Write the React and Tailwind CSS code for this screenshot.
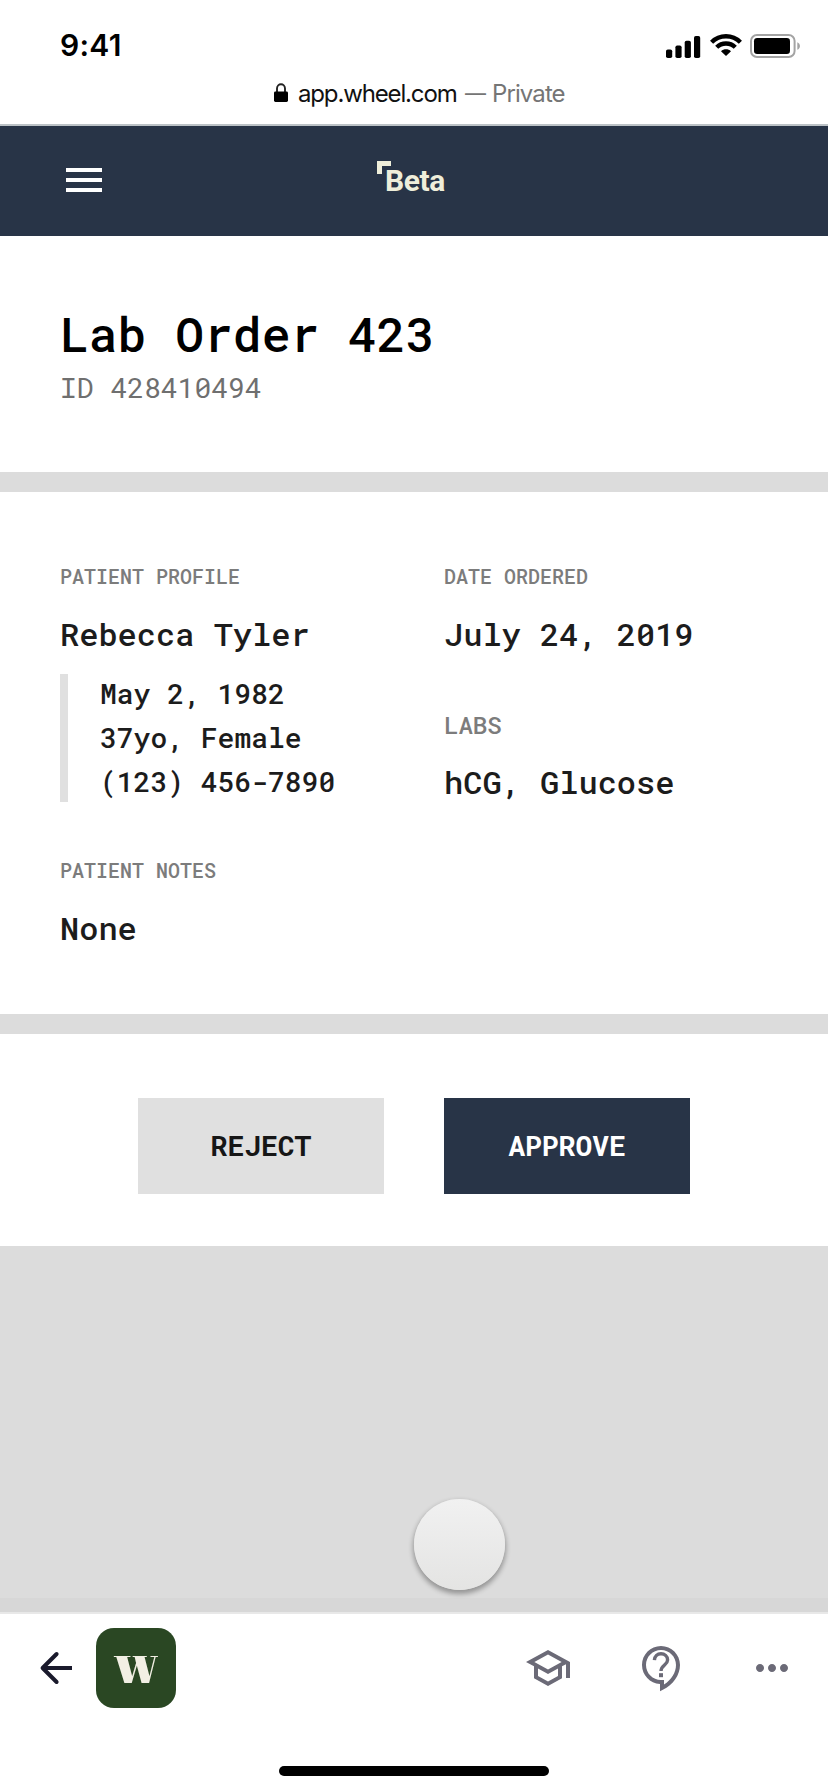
import { MdOutlineSchool, MdMoreHoriz } from "react-icons/md";

function StatusBar() {
  return (
    <div className="flex h-[68px] items-start justify-between pl-[60px] pr-[26px] font-['Inter',sans-serif]">
      <span className="mt-[27px] text-[30px] leading-9 font-semibold tracking-[0.3px] text-black">9:41</span>
      <div className="mt-8 flex gap-[8px]">
        <svg width="36" height="28" viewBox="0 0 36 28" fill="#000">
          <rect x="0" y="17.5" width="6.2" height="8.5" rx="1.8" />
          <rect x="9.4" y="13.5" width="6.2" height="12.5" rx="1.8" />
          <rect x="18.7" y="8.8" width="6.2" height="17.2" rx="1.8" />
          <rect x="28" y="4" width="6.2" height="22" rx="1.8" />
        </svg>
        <svg width="32" height="28" viewBox="0 0 32 28" fill="none" stroke="#000" strokeWidth="4.4">
          <path d="M1.6 10.2C9.6 2.2 22.4 2.2 30.4 10.2" />
          <path d="M6.7 15.3C11.9 10.2 20.1 10.2 25.3 15.3" />
          <path d="M11 19.2C13.9 16.6 18.1 16.6 21 19.2L16 24Z" fill="#000" stroke="none" />
        </svg>
        <svg width="52" height="28" viewBox="0 0 52 28">
          <rect x="1" y="3" width="43.6" height="22" rx="6" fill="none" stroke="#a3a3a3" strokeWidth="2" />
          <rect x="4" y="6" width="36" height="16" rx="3.2" fill="#000" />
          <path d="M47.3 10.2C50.8 11.5 50.8 16.5 47.3 17.8Z" fill="#a3a3a3" />
        </svg>
      </div>
    </div>
  );
}

function AddressBar() {
  return (
    <div className="flex h-[56px] items-start pl-[273px] pt-[11px] font-['Inter',sans-serif] text-[24px] leading-[30px]">
      <svg className="mt-1 shrink-0" width="16" height="20" viewBox="0 0 16 20">
        <path d="M4 9V5.6C4 -0.2 12 -0.2 12 5.6V9" fill="none" stroke="#222" strokeWidth="1.9" />
        <rect x="1" y="8.5" width="14" height="10.5" rx="1.4" fill="#000" />
      </svg>
      <span className="ml-[9px] w-[160px] tracking-[-1.15px] text-[#111]">app.wheel.com</span>
      <span className="ml-[7px] w-[27px] text-[21px] text-[#757575]">—</span>
      <span className="tracking-[-0.9px] text-[#757575]">Private</span>
    </div>
  );
}

function NavBar() {
  return (
    <header className="flex h-[110px] items-start bg-[#283447]">
      <button aria-label="Menu" className="ml-[66px] mt-[42px] flex w-9 flex-col gap-1.5">
        <span className="h-1 bg-white" />
        <span className="h-1 bg-white" />
        <span className="h-1 bg-white" />
      </button>
      <div className="ml-[275px] mt-[35px] flex items-start">
        <span className="h-[13px] w-[14px] border-l-5 border-t-5 border-[#efeeda]" />
        <span className="-ml-[6px] mt-[2px] font-['Roboto',sans-serif] text-[30px] leading-9 font-bold tracking-[-0.4px] text-[#efeeda]">
          Beta
        </span>
      </div>
    </header>
  );
}

function Label({ children }) {
  return <div className="text-[20px] leading-6 font-medium text-[#7c7c7c]">{children}</div>;
}

function Value({ children }) {
  return <div className="text-[32px] leading-10 font-medium text-[#1c1c1c]">{children}</div>;
}

function Details() {
  return (
    <section className="grid h-[522px] grid-cols-[384px_1fr] content-start bg-white pl-[60px] pt-[72px]">
      <div>
        <Label>PATIENT PROFILE</Label>
        <div className="mt-[26px]"><Value>Rebecca Tyler</Value></div>
        <div className="mt-5 flex h-32 flex-col justify-center border-l-8 border-[#e0e0e0] pl-8 text-[28px] font-medium text-[#1c1c1c]">
          <span className="h-11 shrink-0 leading-[44px]">May 2, 1982</span>
          <span className="h-11 shrink-0 leading-[44px]">37yo, Female</span>
          <span className="h-11 shrink-0 leading-[44px]">(123) 456-7890</span>
        </div>
        <div className="mt-14"><Label>PATIENT NOTES</Label></div>
        <div className="mt-[26px]"><Value>None</Value></div>
      </div>
      <div>
        <Label>DATE ORDERED</Label>
        <div className="mt-[26px]"><Value>July 24, 2019</Value></div>
        <div className="mt-[57px] text-[24px] leading-7 font-medium text-[#7c7c7c]">LABS</div>
        <div className="mt-[23px]"><Value>hCG, Glucose</Value></div>
      </div>
    </section>
  );
}

function SupportIcon() {
  return (
    <svg className="ml-[66px]" width="48" height="48" viewBox="0 0 24 24" fill="currentColor">
      <path d="M11.5 1C6.26 1 2 5.26 2 10.5c0 5.07 3.99 9.23 9 9.49v3.6l1.43-.69C17.56 20.43 21 15.45 21 10.5 21 5.26 16.74 1 11.5 1zM13 20.3V18h-1.5C7.36 18 4 14.64 4 10.5S7.36 3 11.5 3 19 6.36 19 10.5c0 3.65-2.3 7.46-6 9.8z" fillRule="evenodd" />
      <path d="M8.2 8.1C8.3 6.1 9.7 4.9 11.5 4.9C13.3 4.9 14.8 6.1 14.8 8C14.8 10.4 11.5 10.6 11.5 13.5" fill="none" stroke="currentColor" strokeWidth="1.7" />
      <path d="M10.5 14.6h2v2h-2z" />
    </svg>
  );
}

function BottomBar() {
  return (
    <footer className="flex h-[180px] flex-col border-t-2 border-[#e8e8e8] bg-white">
      <div className="flex h-[108px] items-center pl-8 pr-8">
        <svg width="48" height="48" viewBox="0 0 48 48" fill="none" stroke="#1a1a2c" strokeWidth="4">
          <path d="M24.6 10L10.6 24L24.6 38" strokeLinecap="round" strokeLinejoin="round" />
          <path d="M11 24H40" />
        </svg>
        <div className="ml-4 flex h-20 w-20 items-center justify-center rounded-[18px] bg-[#2a4723]">
          <span className="-mt-[14px] scale-x-[0.94] font-['Abril_Fatface','Liberation_Serif',serif] text-[58px] leading-[64px] text-[#f2efe4]">w</span>
        </div>
        <div className="ml-auto flex items-center text-[#6b6a77]">
          <MdOutlineSchool size={48} />
          <SupportIcon />
          <MdMoreHoriz size={48} className="ml-[62px]" />
        </div>
      </div>
      <div className="mx-auto mt-[44px] h-[10px] w-[270px] rounded-full bg-black" />
    </footer>
  );
}

export default function App() {
  return (
    <div className="flex h-[1792px] w-[828px] flex-col overflow-hidden bg-[#dcdcdc] font-['Roboto_Mono','DejaVu_Sans_Mono',monospace]">
      <div className="h-[126px] border-b-2 border-[#bcc2c6] bg-white">
        <StatusBar />
        <AddressBar />
      </div>
      <NavBar />
      <section className="h-[236px] bg-white pl-[60px] pt-[70px]">
        <h1 className="text-[48px] leading-[56px] font-medium text-black">Lab Order 423</h1>
        <p className="mt-1.5 text-[28px] leading-10 text-[#6f6f6f]">ID 428410494</p>
      </section>
      <div className="h-5" />
      <Details />
      <div className="h-5" />
      <section className="flex h-[212px] justify-center gap-[60px] bg-white pt-16 text-[28px] font-bold">
        <button className="h-24 w-[246px] bg-[#e0e0e0] text-[#161616]">REJECT</button>
        <button className="h-24 w-[246px] bg-[#283447] text-white">APPROVE</button>
      </section>
      <div className="relative flex flex-1 flex-col justify-end">
        <div className="absolute left-[414px] top-[253px] h-[91px] w-[91px] rounded-full bg-linear-to-b from-[#f1f1f1] to-[#e4e4e3] shadow-[0_3px_5px_1px_rgba(0,0,0,0.32)]" />
        <div className="h-[14px] bg-[#d7d7d7]" />
      </div>
      <BottomBar />
    </div>
  );
}
